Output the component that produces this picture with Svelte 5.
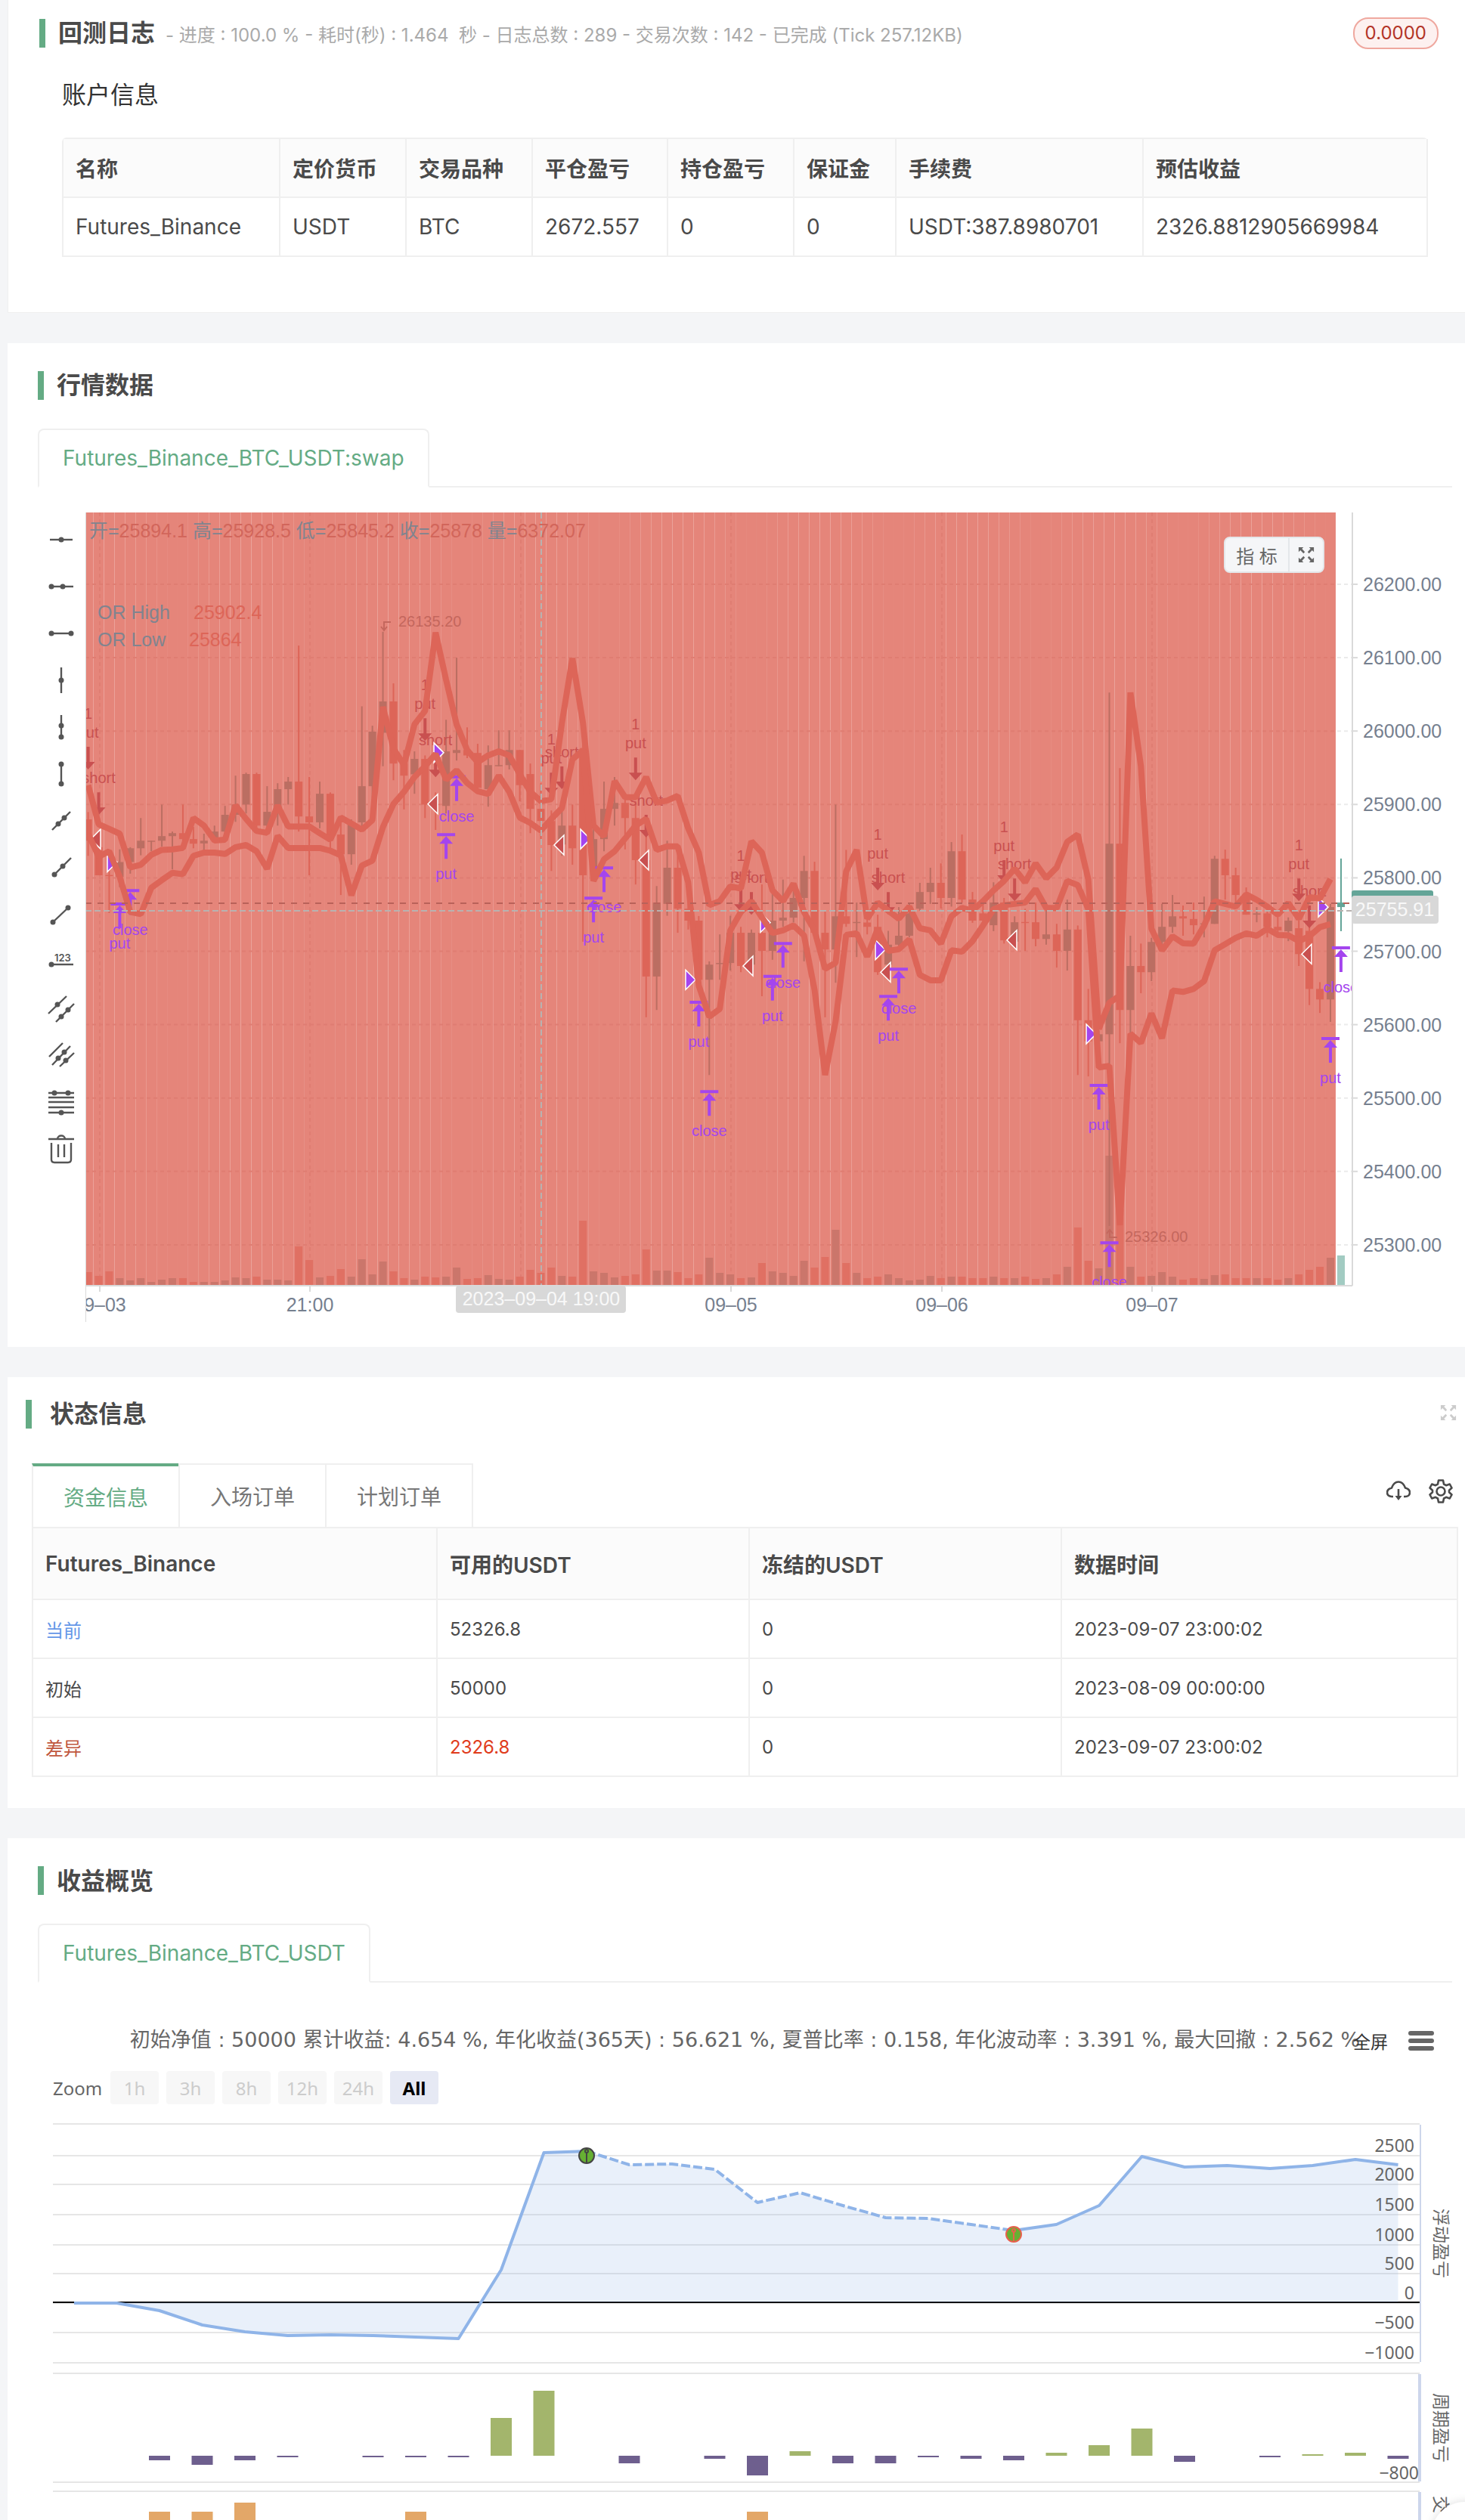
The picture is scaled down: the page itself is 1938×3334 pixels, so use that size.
<script lang="ts">
	const account = {
		head: ['名称', '定价货币', '交易品种', '平仓盈亏', '持仓盈亏', '保证金', '手续费', '预估收益'],
		row: ['Futures_Binance', 'USDT', 'BTC', '2672.557', '0', '0', 'USDT:387.8980701', '2326.8812905669984']
	};

	const funds = [
		{ name: '当前', free: '52326.8', frozen: '0', time: '2023-09-07 23:00:02', tone: 'now' },
		{ name: '初始', free: '50000', frozen: '0', time: '2023-08-09 00:00:00', tone: '' },
		{ name: '差异', free: '2326.8', frozen: '0', time: '2023-09-07 23:00:02', tone: 'diff' }
	];

	const tools = [
		{ label: '水平直线', d: 'M3 18H33', dots: [[18, 18]] },
		{ label: '水平射线', d: 'M5 18H34', dots: [[5, 18], [20, 18]] },
		{ label: '水平线段', d: 'M5 18H31', dots: [[5, 18], [31, 18]] },
		{ label: '垂直直线', d: 'M18 1V35', dots: [[18, 18]] },
		{ label: '垂直射线', d: 'M18 2V31', dots: [[18, 16], [18, 31]] },
		{ label: '垂直线段', d: 'M18 5V31', dots: [[18, 5], [18, 31]] },
		{ label: '直线', d: 'M6 30L30 6', dots: [[14, 22], [22, 14]] },
		{ label: '射线', d: 'M9 27L31 5', dots: [[9, 27], [20, 16]] },
		{ label: '线段', d: 'M7 28L27 9', dots: [[7, 28], [27, 9]] },
		{ label: '价格线', d: 'M5 22H34', dots: [[5, 22]], text: '123' },
		{ label: '价格通道线', d: 'M1 25L25 2M11 36L35 12', dots: [[13, 13], [18, 29], [27, 20]] },
		{ label: '平行直线', d: 'M2 20L20 2M6 31L30 6M16 33L35 15', dots: [[14, 22], [22, 14], [24, 25]] },
		{ label: '斐波那契回调', d: 'M1 6H35M1 12H35M1 18H35M1 25H35M1 32H35', dots: [[9, 6], [27, 6], [18, 32]] },
		{ label: '清除', d: 'M1 5H35M13 5C13 -1 23 -1 23 5M5 10V32Q5 36 9 36H27Q31 36 31 32V10M14 12V29M22 12V29', dots: [] }
	];

	// [up, high, body top, body bottom, low, volume]
	const candles = [
		[0, 1160, 1187, 1266, 1322, 17], [0, 1266, 1290, 1394, 1394, 12], [0, 1300, 1393, 1397, 1534, 18],
		[1, 1298, 1345, 1400, 1438, 9], [1, 1290, 1294, 1345, 1388, 6], [1, 1182, 1266, 1294, 1320, 9],
		[1, 1266, 1266, 1270, 1305, 4], [1, 1132, 1249, 1266, 1288, 7], [1, 1232, 1238, 1249, 1372, 9],
		[0, 1132, 1238, 1260, 1290, 9], [0, 1215, 1260, 1277, 1294, 4], [1, 1240, 1266, 1276, 1310, 4],
		[1, 1210, 1232, 1260, 1270, 4], [1, 1137, 1170, 1232, 1240, 6], [1, 1025, 1132, 1170, 1196, 10],
		[1, 1014, 1019, 1132, 1165, 9], [0, 1014, 1019, 1210, 1215, 11], [1, 1064, 1159, 1210, 1215, 7],
		[1, 1053, 1075, 1159, 1210, 7], [1, 1030, 1047, 1075, 1132, 6], [0, 543, 1047, 1176, 1232, 51],
		[0, 1030, 1176, 1198, 1394, 33], [1, 1047, 1092, 1198, 1220, 10], [0, 1087, 1092, 1260, 1310, 12],
		[0, 1180, 1243, 1316, 1467, 21], [1, 1187, 1198, 1316, 1355, 11], [1, 768, 1064, 1198, 1232, 34],
		[1, 840, 862, 1064, 1200, 14], [1, 492, 750, 866, 990, 31], [0, 683, 750, 980, 1042, 18],
		[0, 930, 980, 1025, 1150, 9], [1, 935, 963, 1020, 1092, 7], [0, 950, 963, 1132, 1182, 11],
		[0, 1087, 1130, 1134, 1226, 10], [1, 818, 935, 1137, 1165, 11], [1, 588, 930, 941, 969, 23],
		[0, 846, 930, 950, 960, 8], [0, 907, 941, 1070, 1080, 9], [1, 913, 986, 1075, 1140, 13],
		[1, 857, 986, 990, 990, 8], [1, 857, 930, 986, 1002, 7], [0, 930, 930, 1060, 1120, 11],
		[0, 980, 1019, 1148, 1238, 20], [0, 1053, 1148, 1193, 1260, 16], [0, 1154, 1193, 1282, 1378, 23],
		[1, 1148, 1210, 1280, 1322, 12], [0, 1132, 1210, 1294, 1355, 11], [0, 820, 930, 1394, 1640, 85],
		[1, 1220, 1260, 1365, 1370, 18], [1, 1047, 1148, 1260, 1305, 16], [1, 1030, 1126, 1148, 1210, 10],
		[0, 1110, 1126, 1182, 1298, 12], [0, 1120, 1182, 1338, 1428, 14], [0, 1200, 1338, 1769, 1920, 47],
		[1, 1434, 1495, 1769, 1893, 19], [1, 1266, 1366, 1500, 1544, 19], [0, 1310, 1366, 1518, 1607, 17],
		[0, 1480, 1518, 1562, 1595, 9], [0, 1545, 1562, 1781, 1800, 14], [1, 1713, 1725, 1781, 2134, 36],
		[1, 1613, 1719, 1723, 1781, 16], [1, 1544, 1607, 1719, 1747, 14], [0, 1585, 1607, 1730, 1753, 9],
		[1, 1595, 1607, 1725, 1729, 10], [0, 1428, 1607, 1674, 1842, 29], [1, 1458, 1562, 1674, 1707, 18],
		[1, 1410, 1551, 1562, 1585, 16], [1, 1440, 1478, 1551, 1569, 12], [1, 1322, 1378, 1478, 1713, 32],
		[0, 1344, 1378, 1607, 1620, 23], [0, 1528, 1607, 1669, 1920, 37], [1, 1132, 1546, 1669, 1792, 73],
		[0, 1300, 1546, 1574, 1585, 29], [1, 1495, 1567, 1571, 1697, 16], [0, 1535, 1569, 1585, 1613, 9],
		[0, 1540, 1585, 1753, 1763, 11], [1, 1600, 1651, 1725, 1730, 14], [1, 1512, 1618, 1651, 1655, 9],
		[1, 1500, 1535, 1618, 1624, 6], [1, 1422, 1456, 1518, 1525, 7], [1, 1366, 1422, 1456, 1500, 12],
		[0, 1350, 1422, 1478, 1517, 9], [1, 1271, 1305, 1478, 1510, 11], [0, 1243, 1305, 1484, 1495, 11],
		[0, 1456, 1484, 1562, 1570, 9], [0, 1500, 1535, 1562, 1574, 9], [1, 1420, 1495, 1579, 1601, 11],
		[0, 1478, 1495, 1635, 1647, 9], [1, 1546, 1568, 1640, 1645, 9], [0, 1518, 1567, 1571, 1674, 11],
		[0, 1495, 1568, 1630, 1657, 8], [1, 1512, 1613, 1630, 1651, 9], [0, 1574, 1613, 1674, 1736, 14],
		[1, 1484, 1595, 1674, 1747, 24], [0, 1580, 1595, 1931, 2134, 76], [0, 1815, 1931, 2009, 2139, 32],
		[1, 1969, 1983, 2009, 2009, 22], [1, 717, 1277, 1983, 2693, 171], [0, 997, 1277, 1893, 2016, 100],
		[1, 1618, 1730, 1893, 2026, 24], [0, 1647, 1730, 1753, 1831, 11], [1, 1626, 1641, 1753, 1786, 12],
		[1, 1500, 1585, 1641, 1672, 17], [1, 1467, 1546, 1585, 1607, 11], [0, 1506, 1546, 1554, 1618, 7],
		[0, 1495, 1556, 1579, 1613, 9], [1, 1473, 1572, 1576, 1624, 8], [1, 1322, 1333, 1574, 1574, 13],
		[0, 1299, 1333, 1394, 1484, 14], [0, 1366, 1394, 1467, 1495, 9], [0, 1439, 1467, 1540, 1540, 9],
		[1, 1512, 1535, 1540, 1568, 9], [0, 1520, 1535, 1585, 1624, 9], [0, 1540, 1585, 1598, 1624, 7],
		[1, 1550, 1562, 1601, 1638, 9], [0, 1560, 1590, 1686, 1730, 14], [0, 1506, 1600, 1815, 1875, 20],
		[0, 1790, 1815, 1854, 1904, 24], [1, 1500, 1512, 1854, 1937, 36]
	];

	const orHigh = [
		1060, 1205, 1222, 1240, 1365, 1355, 1318, 1300, 1298, 1293, 1182, 1210, 1265, 1262, 1135, 1185, 1230, 1237, 1135, 1213,
		1213, 1213, 1238, 1262, 1180, 1202, 1225, 1190, 770, 925, 985, 835, 785, 495, 670, 835, 930, 975, 950, 935,
		950, 1020, 1085, 1120, 1112, 830, 590, 830, 1210, 1250, 1045, 1105, 1105, 1030, 1125, 1117, 1100, 1220, 1310, 1505,
		1490, 1435, 1443, 1268, 1310, 1450, 1490, 1425, 1530, 1600, 1741, 1718, 1380, 1300, 1555, 1495, 1525, 1555, 1510, 1590,
		1598, 1647, 1546, 1515, 1525, 1490, 1450, 1415, 1370, 1420, 1350, 1405, 1365, 1270, 1243, 1410, 1963, 1866, 1840, 717,
		990, 1592, 1672, 1620, 1646, 1647, 1580, 1490, 1500, 1510, 1465, 1485, 1510, 1540, 1497, 1555, 1475, 1480, 1408
	];
	const orLow = [
		1240, 1325, 1305, 1400, 1530, 1538, 1440, 1412, 1385, 1390, 1322, 1310, 1310, 1315, 1290, 1282, 1305, 1370, 1248, 1293,
		1293, 1293, 1293, 1303, 1320, 1468, 1358, 1340, 1215, 1130, 1085, 1030, 990, 945, 1040, 1005, 1052, 1083, 1093, 1025,
		1085, 1180, 1200, 1228, 1185, 1145, 965, 930, 1415, 1335, 1305, 1258, 1210, 1185, 1300, 1287, 1287, 1420, 1803, 1918,
		1889, 1598, 1530, 1490, 1550, 1608, 1598, 1580, 1617, 1820, 2134, 1935, 1615, 1609, 1695, 1592, 1674, 1668, 1632, 1763,
		1783, 1783, 1672, 1677, 1638, 1580, 1520, 1505, 1500, 1495, 1445, 1515, 1515, 1415, 1430, 1520, 2106, 2100, 2690, 1981,
		2015, 1906, 1998, 1821, 1826, 1815, 1786, 1672, 1649, 1626, 1609, 1618, 1592, 1615, 1617, 1638, 1620, 1586, 1575
	];

	const sells: [number, string, number][] = [
		[0, 'put', 918], [1, 'short', 1087], [32, 'put', 812], [33, 'short', 947], [44, 'put', 1014], [45, 'short', 991],
		[52, 'put', 958], [53, 'short', 1170], [62, 'put', 1445], [63, 'short', 1456], [75, 'put', 1366], [76, 'short', 1456],
		[87, 'put', 1338], [88, 'short', 1406], [115, 'put', 1406], [116, 'short', 1506]
	];
	const buys: [number, string, number][] = [
		[3, 'put', 1495], [4, 'close', 1445], [34, 'put', 1238], [35, 'close', 1024], [48, 'put', 1473], [49, 'close', 1361],
		[58, 'put', 1859], [59, 'close', 2190], [65, 'put', 1763], [66, 'close', 1641], [76, 'put', 1837], [77, 'close', 1736],
		[96, 'put', 2167], [97, 'close', 2750], [118, 'put', 1993], [119, 'close', 1657]
	];
	const closeFlags = [[29, 1345], [461, 940], [655, 1260], [794, 1781], [893, 1569], [1045, 1670], [1324, 1982], [1631, 1512]];
	const openFlags = [[20, 1260], [466, 1130], [633, 1282], [745, 1338], [883, 1730], [1065, 1753], [1232, 1634], [1622, 1686]];

	const prices = [26200, 26100, 26000, 25900, 25800, 25700, 25600, 25500, 25400, 25300];
	const priceY = (p: number) => 95 + (26200 - p) * 0.971;
	const days = [
		{ x: 19, text: '09–03' }, { x: 297, text: '21:00' }, { x: 576, text: '' },
		{ x: 854, text: '09–05' }, { x: 1133, text: '09–06' }, { x: 1411, text: '09–07' }
	];

	const STEP = 13.927;
	const FLOOR = 1022;
	const bx = (i: number) => 3.6 + STEP * i;
	const y = (v: number) => (v - 50) / 2.8;
	const track = (values: number[]) => values.map((v, i) => `${bx(i).toFixed(1)},${y(v).toFixed(1)}`).join(' ');

	const ranges = ['1h', '3h', '8h', '12h', '24h', 'All'];
	const equity = [
		238, 238, 248, 267, 276, 281, 280, 281, 283, 285, 194, 39, 37, 55, 54, 61,
		105, 92, 109, 125, 126, 134, 142, 134, 109, 44, 58, 56, 60, 56, 48, 55
	];
	const periods = [
		0, 0, -6, -12, -6, -2, 0, -2, -2, -2, 50, 86, 0, -10, 0, -4,
		-26, 6, -10, -10, -2, -4, -6, 4, 14, 36, -8, 0, -2, 2, 4, -4
	];
	const trades = [[2, 514], [3, 514], [4, 502], [8, 514], [16, 514]];
	const levels = [
		{ at: 43, label: '2500' }, { at: 81, label: '2000' }, { at: 121, label: '1500' }, { at: 161, label: '1000' },
		{ at: 199, label: '500' }, { at: 238, label: '0' }, { at: 277, label: '−500' }, { at: 317, label: '−1000' }
	];
	const ex = (i: number) => 48 + 56.5 * i;
	const slice = (a: number, b: number) => equity.slice(a, b + 1).map((v, i) => `${ex(a + i)},${v}`).join(' ');
</script>

{#snippet expand()}
	<svg class="expand" viewBox="0 0 24 24" aria-hidden="true">
		<path d="M1 1H8L5.800 3.200L10 8L8 10L3.500 5.500L1 8ZM23 1V8L20.500 5.500L16 10L14 8L18.200 3.200L16 1ZM1 23V16L3.500 18.500L8 14L10 16L5.800 20.800L8 23ZM23 23H16L18.200 20.800L14 16L16 14L20.500 18.500L23 16Z" />
	</svg>
{/snippet}

<main>
	<section class="card log">
		<header class="title">
			<h2>回测日志</h2>
			<span class="progress">- 进度 : 100.0 % - 耗时(秒) : 1.464 &nbsp;秒 - 日志总数 : 289 - 交易次数 : 142 - 已完成 (Tick 257.12KB)</span>
			<span class="badge">0.0000</span>
		</header>
		<h3>账户信息</h3>
		<table class="account">
			<thead>
				<tr>{#each account.head as cell}<th>{cell}</th>{/each}</tr>
			</thead>
			<tbody>
				<tr>{#each account.row as cell}<td>{cell}</td>{/each}</tr>
			</tbody>
		</table>
	</section>

	<section class="card market">
		<header class="title"><h2>行情数据</h2></header>
		<div class="line-tabs"><button class="tab">Futures_Binance_BTC_USDT:swap</button></div>
		<div class="trading">
			<div class="toolbar">
				{#each tools as tool}
					<button aria-label={tool.label}>
						<svg viewBox="0 0 36 36">
							<path d={tool.d} />
							{#each tool.dots as [cx, cy]}<circle {cx} {cy} r="3.5" />{/each}
							{#if tool.text}<text x="9" y="18">{tool.text}</text>{/if}
						</svg>
					</button>
				{/each}
			</div>
			<div class="plot">
				<svg viewBox="0 0 1808 1071">
					<defs>
						<clipPath id="pane"><rect x="1" y="0" width="1675" height="1022" /></clipPath>
						<clipPath id="dates"><rect x="1" y="1022" width="1807" height="49" /></clipPath>
					</defs>

					{#each prices as p}
						<path class="grid-out" d="M1656 {priceY(p)}H1676" />
					{/each}

					<g clip-path="url(#pane)">
						{#each candles as _, i}
							<rect class="band" x={bx(i) - STEP / 2} y="0" width={STEP} height={FLOOR} />
						{/each}
						{#each prices as p}<path class="grid" d="M0 {priceY(p)}H1654" />{/each}
						{#each days as day}<path class="grid" d="M{day.x} 0V1022" />{/each}

						{#each candles as [up, high, top, bottom, low, volume], i}
							<rect class="volume" class:up x={bx(i) - 5} y={FLOOR - volume} width="10" height={volume} />
							<g class="candle" class:up>
								<rect x={bx(i) - 1} y={y(high)} width="2" height={y(low) - y(high)} />
								<rect x={bx(i) - 5} y={y(top)} width="10" height={y(bottom) - y(top)} />
							</g>
						{/each}
						<g class="live">
							<rect x="1660" y={y(1332)} width="2" height={y(1601) - y(1332)} />
							<rect x="1656" y={y(1495)} width="10" height="6" />
							<rect class="live-volume" x="1656" y="983" width="10" height="39" />
						</g>

						<g class="extreme">
							<path d="M404 145H395V155M391 151L395 156L399 151" />
							<text x="414" y="151">26135.20</text>
							<path d="M1365 959H1355V950M1351 954L1355 949L1359 954" />
							<text x="1375" y="965">25326.00</text>
						</g>

						<g class="sell">
							{#each sells as [i, name, v]}
								<path d="M{bx(i) - 2} {y(v)}h4v20h7l-9 10l-9 -10h7z" />
								<text x={bx(i)} y={y(v) - 12}>{name}</text>
								{#if name === 'put'}<text x={bx(i)} y={y(v) - 37}>1</text>{/if}
							{/each}
						</g>
						<g class="flag open">
							{#each openFlags as [fx, v]}<path d="M{fx} {y(v) - 13}v26l-13 -13z" />{/each}
						</g>
						<g class="buy">
							{#each buys as [i, name, v]}
								<path d="M{bx(i) - 12} {y(v)}h24v4h-24zM{bx(i)} {y(v) + 4}l9 10h-7v20h-4v-20h-7z" />
								<text x={bx(i)} y={y(v) + 61}>{name}</text>
							{/each}
						</g>
						<g class="flag close">
							{#each closeFlags as [fx, v]}<path d="M{fx} {y(v) - 13}v26l13 -13z" />{/each}
						</g>

						<polyline class="range" points={track(orHigh)} />
						<polyline class="range" points={track(orLow)} />

						<path class="last" d="M0 517H1676" />
						<path class="cross" d="M0 527H1676M603 0V1022" />

						<text class="legend" x="5" y="33">开=<tspan>25894.1</tspan> 高=<tspan>25928.5</tspan> 低=<tspan>25845.2</tspan> 收=<tspan>25878</tspan> 量=<tspan>6372.07</tspan></text>
						<text class="legend" x="16" y="141">OR High</text>
						<text class="legend" x="143" y="141"><tspan class="soft">25902.4</tspan></text>
						<text class="legend" x="16" y="177">OR Low</text>
						<text class="legend" x="137" y="177"><tspan class="soft">25864</tspan></text>
					</g>

					<path class="axis" d="M0 0V1071M0 1023H1676M1676 0V1023" />
					<g class="scale">
						{#each prices as p}
							<path class="axis" d="M1676 {priceY(p)}h7" />
							<text x="1690" y={priceY(p) + 9}>{p}.00</text>
						{/each}
					</g>
					<g class="scale dates" clip-path="url(#dates)">
						{#each days as day}
							<path class="axis" d="M{day.x} 1023v8" />
							<text x={day.x} y="1057">{day.text}</text>
						{/each}
					</g>

					<rect x="1675" y="500" width="108" height="16" rx="3" fill="#64a598" />
					<g class="hint">
						<rect x="1675" y="507" width="115" height="37" rx="4" />
						<text x="1732" y="534">25755.91</text>
						<rect x="490" y="1023" width="225" height="36" rx="4" />
						<text x="603" y="1049">2023–09–04 19:00</text>
					</g>
				</svg>
				<div class="overlay">
					<button>指 标</button>
					<button aria-label="全屏">{@render expand()}</button>
				</div>
			</div>
		</div>
	</section>

	<section class="card status">
		<header class="title">
			<h2>状态信息</h2>
			<button class="corner" aria-label="展开">{@render expand()}</button>
		</header>
		<div class="box-tabs">
			<button class="active">资金信息</button>
			<button>入场订单</button>
			<button>计划订单</button>
			<div class="actions">
				<button aria-label="下载">
					<svg viewBox="0 0 32 32">
						<path d="M9 23H7C3.500 23 1 21 1 17.500C1 14.500 3.500 12.500 7 11.500C9 6 12 3.500 16 3.500C20 3.500 23 6 25 11.500C28.500 12.500 31 14.500 31 17.500C31 21 28.500 23 25 23H23M16 13V25" />
						<path class="solid" d="M11.500 22H20.500L16 28Z" />
					</svg>
				</button>
				<button aria-label="设置">
					<svg viewBox="0 0 32 32">
						<path d="M13 1.500H19L20 6.500L23 8.200L27.800 6.500L30.500 11.500L27 14.800V17.200L30.500 20.500L27.800 25.500L23 23.800L20 25.500L19 30.500H13L12 25.500L9 23.800L4.200 25.500L1.500 20.500L5 17.200V14.800L1.500 11.500L4.200 6.500L9 8.200L12 6.500Z" />
						<circle cx="16" cy="16" r="5.5" />
					</svg>
				</button>
			</div>
		</div>
		<table class="funds">
			<thead>
				<tr><th>Futures_Binance</th><th>可用的USDT</th><th>冻结的USDT</th><th>数据时间</th></tr>
			</thead>
			<tbody>
				{#each funds as row}
					<tr class={row.tone}>
						<td class="name">{row.name}</td>
						<td class="free">{row.free}</td>
						<td>{row.frozen}</td>
						<td>{row.time}</td>
					</tr>
				{/each}
			</tbody>
		</table>
	</section>

	<section class="card income">
		<header class="title"><h2>收益概览</h2></header>
		<div class="line-tabs"><button class="tab">Futures_Binance_BTC_USDT</button></div>
		<div class="summary">
			<p>初始净值 : 50000 累计收益: 4.654 %, 年化收益(365天) : 56.621 %, 夏普比率 : 0.158, 年化波动率 : 3.391 %, 最大回撤 : 2.562 %</p>
			<div class="menu">
				<button class="full">全屏</button>
				<button aria-label="图表菜单">
					<svg viewBox="0 0 34 26"><path d="M3 3H31M3 13H31M3 23H31" /></svg>
				</button>
			</div>
		</div>
		<div class="zoom">
			<span>Zoom</span>
			{#each ranges as range}
				<button class:active={range === 'All'}>{range}</button>
			{/each}
		</div>
		<svg class="equity" viewBox="0 0 1888 526">
			<path class="rule" d="M20 1H1828M20 317H1828M20 331H1828M20 475H1828M20 487H1828" />
			{#each levels as level}<path class="rule" d="M20 {level.at}H1828" />{/each}
			<path class="zero" d="M20 237H1828" />
			<polygon points="{ex(0)},237 {slice(0, 31)} {ex(31)},237" />
			<polyline points={slice(0, 12)} />
			<polyline class="dashed" points={slice(12, 22)} />
			<polyline points={slice(22, 31)} />
			<g class="pin">
				<circle cx={ex(12)} cy="43" r="10" />
				<path d="M{ex(12)} 38v15" /><circle cx={ex(12)} cy="37" r="2" />
			</g>
			<g class="pin low">
				<circle cx={ex(22)} cy="147" r="10" />
				<path d="M{ex(22)} 144v12" /><circle cx={ex(22)} cy="142" r="2" />
			</g>
			{#each periods as p, i}
				{#if p}<rect x={ex(i) - 14} y={p > 0 ? 440 - p : 440} width="28" height={Math.abs(p)} fill={p > 0 ? '#a3b56c' : '#6e5f8e'} />{/if}
			{/each}
			{#each trades as [i, top]}
				<rect x={ex(i) - 14} y={top} width="28" height="24" fill="#e3a768" />
			{/each}
			<path class="edge" d="M1829 2V316" />
			<path class="edge wide" d="M1828 332V474M1828 488V526" />
			{#each levels as level}<text x="1821" y={level.at - 5} text-anchor="end">{level.label}</text>{/each}
			<text x="1827" y="471" text-anchor="end">−800</text>
			<text transform="translate(1848 159) rotate(90)" text-anchor="middle">浮动盈亏</text>
			<text transform="translate(1848 403) rotate(90)" text-anchor="middle">周期盈亏</text>
			<text transform="translate(1848 493) rotate(90)">交</text>
			<circle class="float" cx="1888" cy="546" r="45" />
		</svg>
	</section>
</main>

<style>
	:global(body) {
		background: #f4f5f7;
	}

	main {
		--green: #64ab84;
		--line: #efefef;
		padding-left: 10px;
		display: flex;
		flex-direction: column;
		gap: 40px;
		overflow: hidden;
		color: #4a4a4a;
		font-family: Inter, "Noto Sans CJK SC", sans-serif;
		font-size: 28px;
	}

	button {
		padding: 0;
		border: 0;
		background: none;
		color: inherit;
		font: inherit;
		cursor: pointer;
	}

	svg {
		display: block;
	}

	.card {
		background: #fff;
	}

	.title {
		display: flex;
		align-items: center;
		height: 38px;
	}

	h2 {
		margin: 0;
		padding-left: 17px;
		border-left: 8px solid var(--green);
		font-size: 32px;
		line-height: 38px;
		font-weight: 600;
	}

	table {
		table-layout: fixed;
		border-collapse: separate;
		border-spacing: 0;
		border-top: 2px solid var(--line);
		border-left: 2px solid var(--line);
	}

	th,
	td {
		height: 76px;
		padding: 0 16px;
		border-right: 2px solid var(--line);
		border-bottom: 2px solid var(--line);
		text-align: left;
		white-space: nowrap;
	}

	th {
		background: #fbfbfb;
		font-weight: 600;
	}

	/* backtest log */

	.log {
		padding: 25px 35px 73px 41px;
		border-left: 1px solid var(--line);
		border-bottom: 1px solid var(--line);
	}

	.progress {
		padding-left: 14px;
		color: #aaa;
		font-size: 24px;
		white-space: nowrap;
	}

	.badge {
		margin-left: auto;
		padding: 0 14px;
		border: 2px solid #efa89f;
		border-radius: 20px;
		background: #fdf1f0;
		color: #b33427;
		font-size: 24px;
		line-height: 38px;
	}

	h3 {
		margin: 38px 0 31px 30px;
		color: #333;
		font-size: 32px;
		line-height: 50px;
		font-weight: 400;
	}

	.account {
		width: calc(100% - 44px);
		margin: 0 14px 0 30px;
		border-radius: 6px 6px 0 0;
	}

	.account th:nth-child(1) { width: 253px; }
	.account th:nth-child(2),
	.account th:nth-child(3),
	.account th:nth-child(5) { width: 133px; }
	.account th:nth-child(4) { width: 145px; }
	.account th:nth-child(6) { width: 101px; }
	.account th:nth-child(7) { width: 293px; }

	/* line tabs */

	.line-tabs {
		display: flex;
		margin-top: 38px;
		border-bottom: 2px solid var(--line);
	}

	.tab {
		height: 78px;
		margin-bottom: -2px;
		padding: 0 31px;
		border: 2px solid var(--line);
		border-bottom-color: #fff;
		border-radius: 8px 8px 0 0;
		background: #fff;
		color: var(--green);
	}

	/* market */

	.market {
		padding: 37px 17px 33px 40px;
	}

	.trading {
		display: flex;
		margin-top: 33px;
	}

	.toolbar {
		flex: none;
		width: 63px;
		padding: 5px 2px 0 0;
		box-sizing: border-box;
		display: flex;
		flex-direction: column;
	}

	.toolbar button {
		height: 62px;
		display: grid;
		place-items: center;
	}

	.toolbar svg {
		width: 36px;
		height: 36px;
		overflow: visible;
		fill: #555;
	}

	.toolbar path {
		fill: none;
		stroke: #555;
		stroke-width: 2.4;
	}

	.toolbar text {
		font-size: 13px;
		font-weight: 600;
	}

	.plot {
		position: relative;
		flex: 1;
		min-width: 0;
		font-family: "Liberation Sans", "Noto Sans CJK SC", sans-serif;
	}

	.plot > svg {
		width: 100%;
	}

	.band { fill: #e5857a; }

	.grid,
	.grid-out {
		stroke: #df7d72;
		stroke-width: 2;
		stroke-dasharray: 5 4;
	}

	.grid-out { stroke: #ebebeb; }

	.volume { fill: #e07063; }
	.volume.up { fill: #cb766b; }
	.candle { fill: #dd6558; }
	.candle.up { fill: #bb6e62; }
	.live { fill: #64a598; }
	.live-volume { fill: #a2cbc2; }

	.extreme {
		fill: #c4675d;
		font-size: 20px;
	}

	.extreme path {
		fill: none;
		stroke: #c4675d;
		stroke-width: 2;
	}

	.sell,
	.buy {
		font-size: 20px;
		text-anchor: middle;
	}

	.sell { fill: #c95050; }
	.buy { fill: #a445ee; }

	.flag {
		stroke: #fff;
		stroke-width: 1.5;
	}

	.open { fill: #c95050; }
	.close { fill: #a445ee; }

	.range {
		fill: none;
		stroke: #dd6558;
		stroke-width: 8;
		stroke-linejoin: bevel;
	}

	.last,
	.cross {
		stroke: #b9625a;
		stroke-width: 2;
		stroke-dasharray: 8 8;
	}

	.cross {
		stroke: #b8b2b0;
		stroke-dasharray: 8 4;
	}

	.legend {
		fill: #80848f;
		font-size: 25px;
	}

	.legend tspan { fill: #d2665b; }
	.legend .soft { fill: #dd6558; }

	.axis {
		fill: none;
		stroke: #dadada;
		stroke-width: 2;
	}

	.scale {
		fill: #76808f;
		font-size: 25px;
	}

	.dates {
		text-anchor: middle;
	}

	.hint {
		fill: #f8f8f8;
		font-size: 25px;
		text-anchor: middle;
	}

	.hint rect { fill: #d8d8d8; }

	.overlay {
		position: absolute;
		top: 32px;
		right: 169px;
		display: flex;
		border: 2px solid #e4e7ea;
		border-radius: 8px;
		background: #f5f6f8;
		color: #666;
		font-size: 24px;
	}

	.overlay button {
		width: 44px;
		height: 44px;
		display: grid;
		place-items: center;
	}

	.overlay button:first-child {
		width: 85px;
		border-right: 2px solid #e4e7ea;
	}

	.expand {
		width: 22px;
		height: 22px;
		fill: currentColor;
	}

	/* status */

	.status {
		padding: 30px 9px 41px 24px;
	}

	.status h2 {
		padding-left: 24px;
	}

	.corner {
		margin: 0 2px 4px auto;
		color: #ccc;
	}

	.box-tabs {
		display: flex;
		margin: 46px 0 0 8px;
	}

	.box-tabs > button {
		width: 196px;
		height: 84px;
		margin-right: -2px;
		border: 2px solid var(--line);
		border-bottom: 0;
		color: #777;
	}

	.box-tabs > .active {
		border-top: 4px solid var(--green);
		color: var(--green);
	}

	.actions {
		display: flex;
		gap: 24px;
		margin: 20px 7px 0 auto;
	}

	.actions button {
		height: 34px;
	}

	.actions svg {
		width: 32px;
		height: 32px;
		fill: none;
		stroke: #4a4a4a;
		stroke-width: 2.6;
		stroke-linejoin: round;
	}

	.actions .solid {
		fill: #4a4a4a;
		stroke: none;
	}

	.funds {
		width: calc(100% - 8px);
		margin-left: 8px;
	}

	.funds th {
		height: 93px;
	}

	.funds td {
		font-size: 24px;
	}

	.funds th:first-child { width: 501px; }
	.funds th:nth-child(2),
	.funds th:nth-child(3) { width: 379px; }

	.now .name { color: #6497e8; }
	.diff .name { color: #c0573f; }
	.diff .free { color: #e03c1c; }

	/* income */

	.income {
		padding: 37px 0 0 40px;
		font-family: "Noto Sans", "Noto Sans CJK SC", sans-serif;
	}

	.income .line-tabs {
		margin: 38px 17px 0 0;
	}

	.income .tab {
		font-family: Inter, sans-serif;
	}

	.summary {
		position: relative;
		margin-right: 17px;
		padding-top: 56px;
	}

	.summary p {
		margin: 0;
		color: #666;
		font-family: "DejaVu Sans", "Noto Sans CJK SC", sans-serif;
		font-size: 27px;
		line-height: 40px;
		text-align: center;
		white-space: nowrap;
	}

	.menu {
		position: absolute;
		right: 24px;
		bottom: 0;
		display: flex;
		align-items: center;
		gap: 27px;
		height: 38px;
		color: #333;
		font-size: 23px;
	}

	.menu path {
		stroke: #666;
		stroke-width: 6;
		stroke-linecap: round;
	}

	.menu svg {
		width: 34px;
		height: 26px;
	}

	.zoom {
		display: flex;
		align-items: center;
		gap: 10px;
		margin: 21px 0 25px 20px;
		color: #666;
		font-size: 24px;
	}

	.zoom span {
		width: 66px;
	}

	.zoom button {
		width: 64px;
		height: 44px;
		border-radius: 4px;
		background: #f7f7f7;
		color: #ccc;
	}

	.zoom .active {
		background: #e6e9f4;
		color: #000;
		font-weight: 700;
	}

	.equity {
		width: 100%;
		font-size: 23px;
		fill: #666;
	}

	.rule {
		stroke: #e6e6e6;
		stroke-width: 2;
	}

	.zero {
		stroke: #000;
		stroke-width: 2;
	}

	polygon {
		fill: #8fb4e8;
		fill-opacity: 0.2;
	}

	.equity polyline {
		fill: none;
		stroke: #8fb4e8;
		stroke-width: 4;
		stroke-linejoin: round;
	}

	.equity .dashed {
		stroke-dasharray: 12 4;
	}

	.pin {
		fill: #66b032;
		stroke: #444;
		stroke-width: 2;
	}

	.low {
		stroke: #e8604c;
	}

	.edge {
		stroke: #cdd6eb;
		stroke-width: 2;
	}

	.wide {
		stroke-width: 4;
	}

	.float {
		fill: #fff;
		filter: drop-shadow(0 0 6px #0002);
	}
</style>
